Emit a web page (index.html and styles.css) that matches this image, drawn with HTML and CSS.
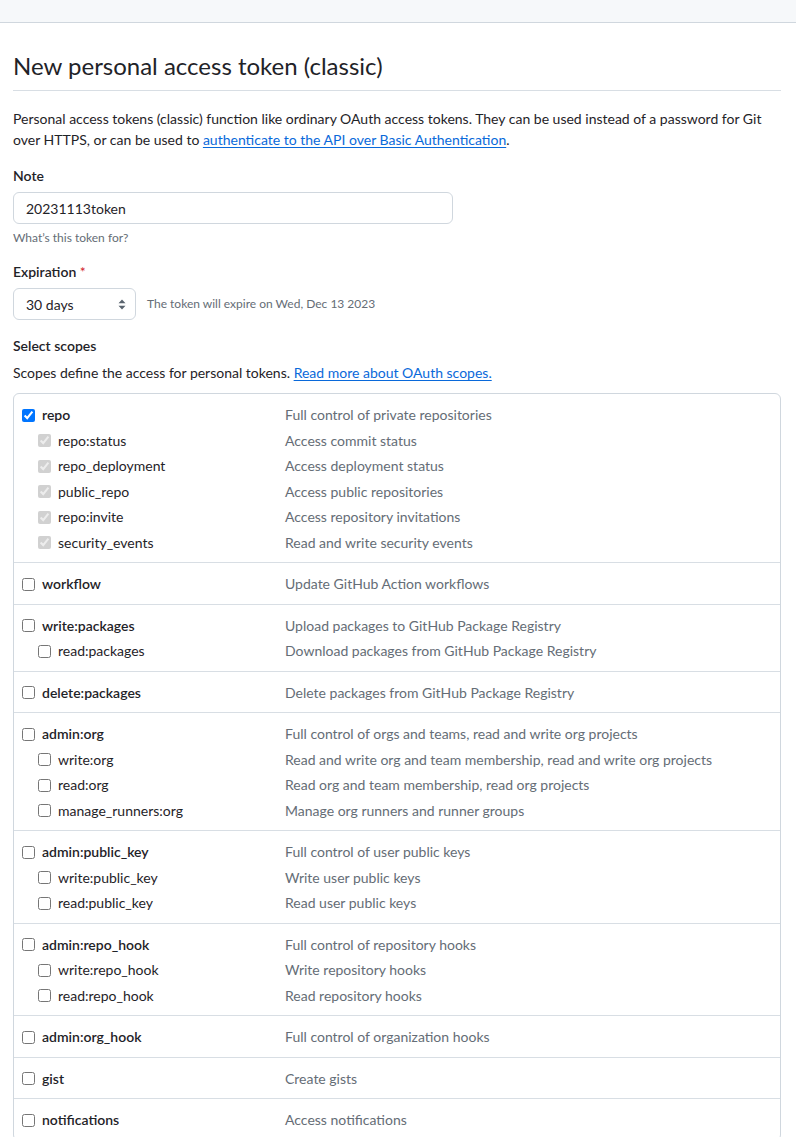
FILE: index.html
```html
<!DOCTYPE html>
<html lang="en">
<head>
<meta charset="utf-8">
<title>New personal access token (classic)</title>
<link rel="stylesheet" href="styles.css">
</head>
<body>
<header class="topbar"></header>
<main class="page">
  <h1 class="subhead">New personal access token (classic)</h1>
  <p class="intro">Personal access tokens (classic) function like ordinary OAuth access tokens. They can be used instead of a password for Git over HTTPS, or can be used to <a href="#">authenticate to the API over Basic Authentication</a>.</p>

  <div class="form-group">
    <label class="label" for="note">Note</label>
    <input class="text-input" id="note" type="text" value="20231113token">
    <p class="hint">What’s this token for?</p>
  </div>

  <div class="form-group expiration">
    <div class="label">Expiration <span class="req">*</span></div>
    <div class="expire-row">
      <div class="select">
        <span>30 days</span>
        <svg class="select-arrow" width="8" height="11" viewBox="0 0 8 11"><path d="M4 0.5 L7.5 4.2 H0.5 Z M4 10.5 L7.5 6.8 H0.5 Z" fill="#59636e"/></svg>
      </div>
      <span class="hint-inline">The token will expire on Wed, Dec 13 2023</span>
    </div>
  </div>

  <div class="form-group scopes-group">
    <div class="label">Select scopes</div>
    <p class="scopes-intro">Scopes define the access for personal tokens. <a href="#">Read more about OAuth scopes.</a></p>

    <div class="scopes">
      <ul class="group">
        <li class="row top"><label class="name"><input type="checkbox" checked><span>repo</span></label><span class="desc">Full control of private repositories</span></li>
        <li class="row sub"><label class="name"><input type="checkbox" checked disabled><span>repo:status</span></label><span class="desc">Access commit status</span></li>
        <li class="row sub"><label class="name"><input type="checkbox" checked disabled><span>repo_deployment</span></label><span class="desc">Access deployment status</span></li>
        <li class="row sub"><label class="name"><input type="checkbox" checked disabled><span>public_repo</span></label><span class="desc">Access public repositories</span></li>
        <li class="row sub"><label class="name"><input type="checkbox" checked disabled><span>repo:invite</span></label><span class="desc">Access repository invitations</span></li>
        <li class="row sub"><label class="name"><input type="checkbox" checked disabled><span>security_events</span></label><span class="desc">Read and write security events</span></li>
      </ul>
      <ul class="group">
        <li class="row top"><label class="name"><input type="checkbox"><span>workflow</span></label><span class="desc">Update GitHub Action workflows</span></li>
      </ul>
      <ul class="group">
        <li class="row top"><label class="name"><input type="checkbox"><span>write:packages</span></label><span class="desc">Upload packages to GitHub Package Registry</span></li>
        <li class="row sub"><label class="name"><input type="checkbox"><span>read:packages</span></label><span class="desc">Download packages from GitHub Package Registry</span></li>
      </ul>
      <ul class="group">
        <li class="row top"><label class="name"><input type="checkbox"><span>delete:packages</span></label><span class="desc">Delete packages from GitHub Package Registry</span></li>
      </ul>
      <ul class="group">
        <li class="row top"><label class="name"><input type="checkbox"><span>admin:org</span></label><span class="desc">Full control of orgs and teams, read and write org projects</span></li>
        <li class="row sub"><label class="name"><input type="checkbox"><span>write:org</span></label><span class="desc">Read and write org and team membership, read and write org projects</span></li>
        <li class="row sub"><label class="name"><input type="checkbox"><span>read:org</span></label><span class="desc">Read org and team membership, read org projects</span></li>
        <li class="row sub"><label class="name"><input type="checkbox"><span>manage_runners:org</span></label><span class="desc">Manage org runners and runner groups</span></li>
      </ul>
      <ul class="group">
        <li class="row top"><label class="name"><input type="checkbox"><span>admin:public_key</span></label><span class="desc">Full control of user public keys</span></li>
        <li class="row sub"><label class="name"><input type="checkbox"><span>write:public_key</span></label><span class="desc">Write user public keys</span></li>
        <li class="row sub"><label class="name"><input type="checkbox"><span>read:public_key</span></label><span class="desc">Read user public keys</span></li>
      </ul>
      <ul class="group">
        <li class="row top"><label class="name"><input type="checkbox"><span>admin:repo_hook</span></label><span class="desc">Full control of repository hooks</span></li>
        <li class="row sub"><label class="name"><input type="checkbox"><span>write:repo_hook</span></label><span class="desc">Write repository hooks</span></li>
        <li class="row sub"><label class="name"><input type="checkbox"><span>read:repo_hook</span></label><span class="desc">Read repository hooks</span></li>
      </ul>
      <ul class="group">
        <li class="row top"><label class="name"><input type="checkbox"><span>admin:org_hook</span></label><span class="desc">Full control of organization hooks</span></li>
      </ul>
      <ul class="group">
        <li class="row top"><label class="name"><input type="checkbox"><span>gist</span></label><span class="desc">Create gists</span></li>
      </ul>
      <ul class="group">
        <li class="row top"><label class="name"><input type="checkbox"><span>notifications</span></label><span class="desc">Access notifications</span></li>
      </ul>
    </div>
  </div>
</main>
</body>
</html>
```
FILE: styles.css
```css
* { box-sizing: border-box; }

body {
  margin: 0;
  background: #ffffff;
  color: #1f2328;
  font-family: Lato, "Liberation Sans", sans-serif;
  font-size: 14px;
  line-height: 1.5;
}

a { color: #0969da; text-decoration: underline; text-underline-offset: 2px; }

.topbar {
  height: 23px;
  background: #f6f8fa;
  border-bottom: 1px solid #d0d7de;
}

.page {
  width: 768px;
  margin-left: 13px;
}

.subhead {
  margin: 28px 0 17px;
  padding-bottom: 9px;
  font-size: 24px;
  font-weight: 400;
  line-height: 30px;
  border-bottom: 1px solid #d8dee4;
}

.intro { margin: 0; }

.form-group { margin-top: 15px; }
.form-group.expiration { margin-top: 14px; }

.label {
  display: block;
  font-weight: 600;
  margin-bottom: 6px;
}

.req { color: #d1242f; font-weight: 400; }

.text-input {
  display: block;
  width: 440px;
  height: 32px;
  padding: 5px 12px;
  border: 1px solid #d0d7de;
  border-radius: 6px;
  font: inherit;
  color: #1f2328;
  background: #fff;
  outline: none;
}

.hint {
  margin: 5px 0 0;
  font-size: 12px;
  line-height: 18px;
  color: #656d76;
}

.expire-row {
  display: flex;
  align-items: center;
  gap: 11px;
}

.select {
  width: 123px;
  height: 32px;
  padding: 0 9px 0 12px;
  border: 1px solid #d0d7de;
  border-radius: 6px;
  display: flex;
  align-items: center;
  justify-content: space-between;
  background: #fff;
}

.hint-inline {
  font-size: 12px;
  color: #656d76;
}

.scopes-intro { margin: 0 0 10px; }

.scopes {
  border: 1px solid #d0d7de;
  border-radius: 6px;
}

.group {
  list-style: none;
  margin: 0;
  padding: 11px 0 9px;
  border-top: 1px solid #d8dee4;
}
.group:first-child { border-top: 0; }

.row {
  display: flex;
  align-items: center;
  line-height: 20.5px;
}
.row.sub { margin-top: 5px; }

.name {
  display: flex;
  align-items: center;
  gap: 7px;
  width: 271px;
  padding-left: 8px;
  flex-shrink: 0;
}
.row.top .name { font-weight: 600; }
.row.sub .name { padding-left: 24px; }

.name input {
  margin: 0;
  width: 13px;
  height: 13px;
}

.desc { color: #656d76; }
```
